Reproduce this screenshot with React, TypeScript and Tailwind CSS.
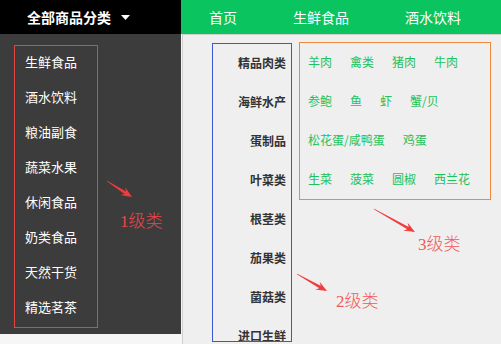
import React from "react";

const level1 = ["生鲜食品", "酒水饮料", "粮油副食", "蔬菜水果", "休闲食品", "奶类食品", "天然干货", "精选茗茶"];
const level2 = ["精品肉类", "海鲜水产", "蛋制品", "叶菜类", "根茎类", "茄果类", "菌菇类", "进口生鲜"];
const level3 = [
  ["羊肉", "禽类", "猪肉", "牛肉"],
  ["参鲍", "鱼", "虾", "蟹/贝"],
  ["松花蛋/咸鸭蛋", "鸡蛋"],
  ["生菜", "菠菜", "圆椒", "西兰花"],
];

function arrowPoints(x1: number, y1: number, x2: number, y2: number) {
  const dx = x2 - x1;
  const dy = y2 - y1;
  const len = Math.hypot(dx, dy);
  const ux = dx / len;
  const uy = dy / len;
  const nx = -uy;
  const ny = ux;
  const headLen = 11;
  const bx = x2 - ux * headLen;
  const by = y2 - uy * headLen;
  const nb = x2 - ux * (headLen - 3);
  const nby = y2 - uy * (headLen - 3);
  const pts: [number, number][] = [
    [x1 + nx * 0.4, y1 + ny * 0.4],
    [nb + nx * 1.4, nby + ny * 1.4],
    [bx + nx * 4.5, by + ny * 4.5],
    [x2, y2],
    [bx - nx * 4.5, by - ny * 4.5],
    [nb - nx * 1.4, nby - ny * 1.4],
    [x1 - nx * 0.4, y1 - ny * 0.4],
  ];
  return pts.map((p) => `${p[0].toFixed(1)},${p[1].toFixed(1)}`).join(" ");
}

const labelFont = { fontFamily: '"Liberation Serif", "Noto Sans CJK SC", serif' };

export default function App() {
  return (
    <div
      className="relative w-[501px] h-[344px] overflow-hidden bg-[#f6f6f6]"
      style={{ fontFamily: '"Noto Sans CJK SC", "Noto Sans", sans-serif' }}
    >
      {/* Header */}
      <div className="flex h-[34px]">
        <div className="w-[181px] bg-black flex items-center pl-[27px]">
          <span className="text-white text-[14px] font-bold leading-none">全部商品分类</span>
          <svg width="9" height="6" viewBox="0 0 9 6" className="ml-[10px] mt-[1px]">
            <polygon points="0,0 9,0 4.5,5" fill="#ffffff" />
          </svg>
        </div>
        <div className="flex-1 bg-[#09c45f] flex items-center">
          {["首页", "生鲜食品", "酒水饮料"].map((t) => (
            <span key={t} className="px-[28px] text-white text-[14px] leading-none">
              {t}
            </span>
          ))}
        </div>
      </div>

      {/* Body */}
      <div className="flex items-start">
        <div className="w-[181px] h-[300px] bg-[#3c3c3c] pt-[11px] pl-[14px]">
          <div className="w-[84px] h-[283px] border border-[#e24444]">
            {level1.map((t) => (
              <div key={t} className="h-[35px] flex items-center pl-[10px] pb-[4px] text-white text-[13px] leading-none">
                {t}
              </div>
            ))}
          </div>
        </div>
        <div className="flex-1 h-[310px] ml-px bg-[#efefef] border-l border-t border-[#cfcfcf] flex items-start">
          <div className="ml-[29px] mt-[8px] w-[80px] h-[299px] border border-[#3d57d0] overflow-hidden">
            {level2.map((t, i) => (
              <div
                key={t}
                className={`h-[39px] flex items-center justify-end pr-[5px] text-[#333333] text-[12px] font-bold leading-none ${i === 0 ? "-mt-[1px]" : ""}`}
              >
                {t}
              </div>
            ))}
          </div>
          <div className="ml-[7px] mt-[7px] w-[192px] h-[158px] border border-[#f0893d] pl-[8px]">
            {level3.map((row, i) => (
              <div key={i} className="h-[39px] flex items-center pb-[2px]">
                {row.map((t) => (
                  <span key={t} className="mr-[18px] text-[#1cc25c] text-[12px] leading-none">
                    {t}
                  </span>
                ))}
              </div>
            ))}
          </div>
        </div>
      </div>

      {/* Annotations */}
      <svg className="absolute inset-0 pointer-events-none" width="501" height="344">
        <polygon points={arrowPoints(107, 181, 132, 197)} fill="#f03c3c" />
        <polygon points={arrowPoints(374, 209, 415, 232)} fill="#f03c3c" />
        <polygon points={arrowPoints(297, 274, 327, 291)} fill="#f03c3c" />
      </svg>
      <div className="absolute left-[120px] top-[211px] text-[17px] leading-[22px] font-light text-[#e8474a]" style={labelFont}>
        1级类
      </div>
      <div className="absolute left-[418px] top-[234px] text-[17px] leading-[22px] font-light text-[#f05a5a]" style={labelFont}>
        3级类
      </div>
      <div className="absolute left-[336px] top-[291px] text-[17px] leading-[22px] font-light text-[#f05a5a]" style={labelFont}>
        2级类
      </div>
    </div>
  );
}
